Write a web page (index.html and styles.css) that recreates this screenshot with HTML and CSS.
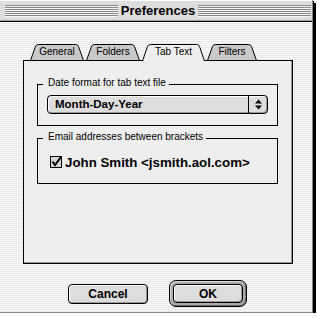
FILE: index.html
```html
<!DOCTYPE html>
<html lang="en">
<head>
    <meta charset="UTF-8">
    <title>Preferences</title>
    <link rel="stylesheet" href="styles.css">
</head>
<body>

    <div class="window">
        <div class="titlebar">
            <div class="stripes"></div>
            <div class="title">Preferences</div>
            <div class="stripes"></div>
        </div>

        <div class="content">
            <div class="tabs">
                <div class="tab tab-general">
                    <svg class="tab-shape" width="54" height="17" viewBox="0 0 54 17"><path d="M0.5 16.5 L5.5 2.5 Q6.3 0.5 8.5 0.5 H45.5 Q47.7 0.5 48.5 2.5 L53.5 16.5 Z"/></svg>
                    <span>General</span>
                </div>
                <div class="tab tab-folders">
                    <svg class="tab-shape" width="54" height="17" viewBox="0 0 54 17"><path d="M0.5 16.5 L5.5 2.5 Q6.3 0.5 8.5 0.5 H45.5 Q47.7 0.5 48.5 2.5 L53.5 16.5 Z"/></svg>
                    <span>Folders</span>
                </div>
                <div class="tab tab-text selected">
                    <svg class="tab-shape" width="63" height="17" viewBox="0 0 63 17"><path d="M0.5 17 L5.5 2.5 Q6.3 0.5 8.5 0.5 H54.5 Q56.7 0.5 57.5 2.5 L62.5 17"/></svg>
                    <span>Tab Text</span>
                </div>
                <div class="tab tab-filters">
                    <svg class="tab-shape" width="50" height="17" viewBox="0 0 50 17"><path d="M0.5 16.5 L5.5 2.5 Q6.3 0.5 8.5 0.5 H41.5 Q43.7 0.5 44.5 2.5 L49.5 16.5 Z"/></svg>
                    <span>Filters</span>
                </div>
            </div>

            <div class="panel">
                <fieldset class="group group-date">
                    <legend>Date format for tab text file</legend>
                    <div class="popup">
                        <span class="popup-value">Month-Day-Year</span>
                        <span class="popup-arrows">
                            <svg width="7" height="11" viewBox="0 0 7 11"><path d="M3.5 0.5 L7 4.5 H0 Z M0 6.5 H7 L3.5 10.5 Z"/></svg>
                        </span>
                    </div>
                </fieldset>

                <fieldset class="group group-email">
                    <legend>Email addresses between brackets</legend>
                    <label class="check">
                        <svg class="check-box" width="12" height="12" viewBox="0 0 12 12">
                            <rect x="0.5" y="0.5" width="11" height="11" fill="#d6d6d6" stroke="#000"/>
                            <path d="M2.5 5.5 L5 9 L11 1" fill="none" stroke="#000" stroke-width="2"/>
                        </svg>
                        John Smith &lt;jsmith.aol.com&gt;
                    </label>
                </fieldset>
            </div>

            <div class="buttons">
                <button class="btn">Cancel</button>
                <div class="default-ring"><button class="btn btn-ok">OK</button></div>
            </div>
        </div>
    </div>

</body>
</html>
```

FILE: styles.css
```css
/* ---- base ---- */
* {
    box-sizing: border-box;
}

body {
    margin: 0;
    background-color: #fff;
    font-family: "Liberation Sans", Arial, sans-serif;
    color: #000;
}

/* ---- window frame ---- */
.window {
    width: 313px;
    height: 313px;
    border-right: 1px solid #888;
    border-bottom: 1px solid #888;
    box-shadow: 1px 1px 0 #000, 3px 3px 0 #000;
    background: repeating-linear-gradient(to bottom, #f7f7f7 0 1px, #e9e9e9 1px 2px);
}

.titlebar {
    height: 22px;
    display: flex;
    align-items: center;
    padding: 0 1px 0 5px;
    background-color: #dddddd;
    border-bottom: 1px solid #000;
    box-shadow: inset 0 1px 0 #fff, inset 0 -1px 0 #999;
}

.stripes {
    flex: 1;
    height: 12px;
    background: repeating-linear-gradient(to bottom, #888 0 1px, #f5f5f5 1px 2px);
}

.title {
    padding: 0 3px;
    font-size: 13px;
    font-weight: bold;
}

.content {
    padding: 22px 0 0 23px;
}

/* ---- tabs ---- */
.tabs {
    display: flex;
    align-items: flex-end;
    gap: 2px;
    height: 16px;
    margin-left: 7px;
}

.tab {
    position: relative;
    height: 16px;
    display: flex;
    justify-content: center;
    align-items: center;
    font-size: 10px;
    line-height: 16px;
}

.tab-general { width: 54px; }
.tab-folders { width: 54px; }
.tab-text { width: 63px; }
.tab-filters { width: 50px; }

.tab-shape {
    position: absolute;
    top: 0;
    left: 0;
    overflow: visible;
}

.tab-shape path {
    fill: #c9c9c9;
    stroke: #000;
}

.tab.selected .tab-shape path {
    fill: #eeeeee;
}

.tab span {
    position: relative;
}

/* ---- panel ---- */
.panel {
    width: 270px;
    height: 204px;
    padding: 16px 14px 0 13px;
    background-color: #eeeeee;
    border: 1px solid #000;
    box-shadow: inset -1px -1px 0 #999;
}

.group {
    margin: 0;
    min-width: 0;
    border: 1px solid #000;
    padding: 3px 9px 11px 9px;
}

.group legend {
    margin-left: -4px;
    padding: 0 3px 3px 5px;
    font-size: 10px;
    line-height: 12px;
}

.group-email {
    margin-top: 5px;
    padding: 8px 9px 13px 9px;
}

/* popup menu */
.popup {
    display: flex;
    height: 19px;
    border: 1px solid #000;
    border-radius: 4px;
    background-color: #dddddd;
    box-shadow: inset 1px 1px 0 #fff, inset -1px -1px 0 #999;
}

.popup-value {
    flex: 1;
    padding-left: 7px;
    font-size: 11.5px;
    font-weight: bold;
    line-height: 16px;
}

.popup-arrows {
    width: 19px;
    display: flex;
    align-items: center;
    justify-content: center;
    border-left: 1px solid #000;
}

/* checkbox */
.check {
    display: flex;
    align-items: center;
    gap: 3px;
    height: 16px;
    margin-left: 3px;
    font-size: 13.3px;
    font-weight: bold;
}

/* ---- buttons ---- */
.buttons {
    display: flex;
    align-items: center;
    gap: 21px;
    margin-top: 16px;
    padding-left: 45px;
}

.btn {
    width: 80px;
    height: 20px;
    padding: 0;
    border: 1px solid #000;
    border-radius: 4px;
    background-color: #dddddd;
    box-shadow: inset 1px 1px 0 #fff, inset -1px -1px 0 #999;
    font-family: "Liberation Sans", Arial, sans-serif;
    font-size: 12px;
    font-weight: bold;
    color: #000;
}

.default-ring {
    display: flex;
    padding: 3px;
    border: 1px solid #000;
    border-radius: 7px;
    background-color: #aaaaaa;
    box-shadow: inset 1px 1px 0 #dddddd, inset -1px -1px 0 #777;
}

.btn-ok {
    width: 70px;
    height: 19px;
}
```
